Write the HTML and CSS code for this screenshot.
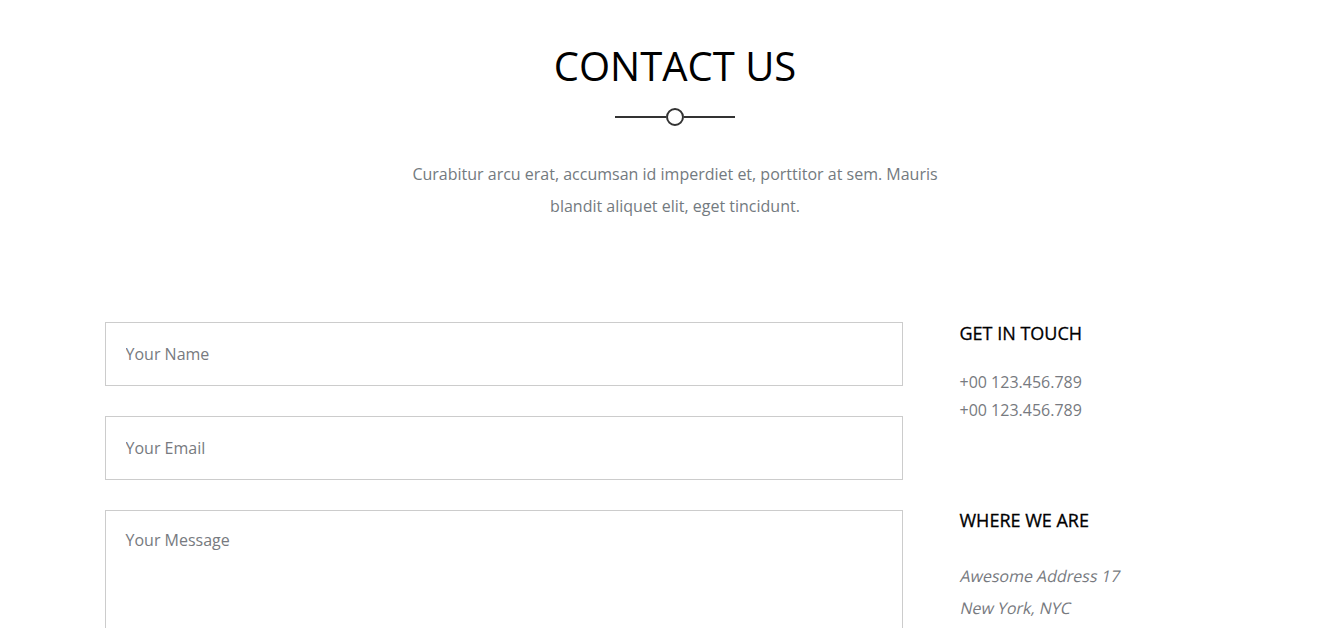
FILE: index.html
```html
<!DOCTYPE html>
<html>
<head>
<meta charset="utf-8">
<link rel="stylesheet" href="styles.css">
</head>
<body>
<section class="contact">
  <header class="intro">
    <h1 class="title">CONTACT US</h1>
    <div class="divider">
      <svg width="120" height="20" viewBox="0 0 120 20">
        <line x1="0" y1="10" x2="51" y2="10" stroke="#333" stroke-width="2"/>
        <line x1="69" y1="10" x2="120" y2="10" stroke="#333" stroke-width="2"/>
        <circle cx="60" cy="10" r="8" fill="#fff" stroke="#333" stroke-width="2"/>
      </svg>
    </div>
    <p class="lead">Curabitur arcu erat, accumsan id imperdiet et, porttitor at sem. Mauris blandit aliquet elit, eget tincidunt.</p>
  </header>
  <div class="body">
    <form class="form">
      <input class="field" type="text" placeholder="Your Name">
      <input class="field" type="email" placeholder="Your Email">
      <textarea class="field message" placeholder="Your Message"></textarea>
    </form>
    <aside class="info">
      <div class="block">
        <h3 class="heading">GET IN TOUCH</h3>
        <p class="phones">+00 123.456.789<br>+00 123.456.789</p>
      </div>
      <div class="block">
        <h3 class="heading">WHERE WE ARE</h3>
        <p class="address"><span class="slant">Awesome Address 17</span><br><span class="slant">New York, NYC</span></p>
      </div>
    </aside>
  </div>
</section>
</body>
</html>
```
FILE: styles.css
```css
* { box-sizing: border-box; }
html, body { margin: 0; padding: 0; background: #fff; }
body { font-family: "Open Sans", "Liberation Sans", sans-serif; color: #777; }

.intro { text-align: center; padding-top: 40px; padding-left: 10px; }
.title {
  margin: 0;
  font-size: 40px;
  font-weight: 400;
  line-height: 52px;
  color: #000;
}
.divider { display: flex; justify-content: center; margin-top: 15px; height: 20px; }
.divider svg { display: block; }
.lead {
  width: 560px;
  margin: 31px auto 0;
  font-size: 16px;
  line-height: 32px;
  color: #737a80;
}

.body {
  width: 1135px;
  margin: 100px auto 0;
  display: flex;
  gap: 57px;
  position: relative;
  left: 2px;
}
.form { width: 798px; display: flex; flex-direction: column; gap: 30px; }
.field {
  display: block;
  width: 100%;
  height: 64px;
  border: 1px solid #ccc;
  padding: 0 20px;
  font-family: inherit;
  font-size: 16px;
  color: #555;
  background: #fff;
  outline: none;
}
.field::placeholder { color: #777a80; opacity: 1; }
.message { height: 160px; padding-top: 17px; resize: none; line-height: 24px; }

.info { flex: 1; }
.heading {
  margin: 0;
  font-size: 18px;
  font-weight: 400;
  line-height: 22px;
  color: #000;
  -webkit-text-stroke: 0.3px #000;
}
.phones { margin: 24px 0 0; font-size: 16px; line-height: 28px; color: #777a80; }
.block + .block { margin-top: 85px; }
.address { margin: 29px 0 0; font-size: 16px; line-height: 32px; color: #777a80; }
.slant { display: inline-block; transform: skewX(-12deg); transform-origin: 0 60%; }
```
